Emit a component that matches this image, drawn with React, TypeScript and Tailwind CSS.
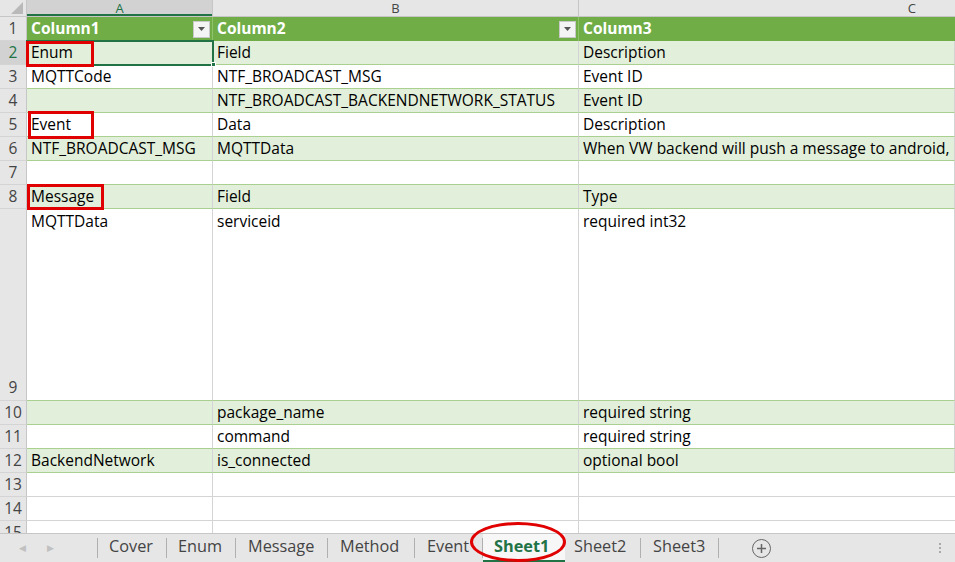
import React from "react";

const FONT = { fontFamily: '"Open Sans", "Liberation Sans", Arial, sans-serif' };

type Row = { n: number; h: number; band: boolean; a: string; b: string; c: string; top?: boolean };

const rows: Row[] = [
  { n: 2, h: 24, band: true, a: "Enum", b: "Field", c: "Description" },
  { n: 3, h: 24, band: false, a: "MQTTCode", b: "NTF_BROADCAST_MSG", c: "Event ID" },
  { n: 4, h: 24, band: true, a: "", b: "NTF_BROADCAST_BACKENDNETWORK_STATUS", c: "Event ID" },
  { n: 5, h: 24, band: false, a: "Event", b: "Data", c: "Description" },
  { n: 6, h: 24, band: true, a: "NTF_BROADCAST_MSG", b: "MQTTData", c: "When VW backend will push a message to android," },
  { n: 7, h: 24, band: false, a: "", b: "", c: "" },
  { n: 8, h: 24, band: true, a: "Message", b: "Field", c: "Type" },
  { n: 9, h: 192, band: false, a: "MQTTData", b: "serviceid", c: "required int32", top: true },
  { n: 10, h: 24, band: true, a: "", b: "package_name", c: "required string" },
  { n: 11, h: 24, band: false, a: "", b: "command", c: "required string" },
  { n: 12, h: 24, band: true, a: "BackendNetwork", b: "is_connected", c: "optional bool" },
];

function Dropdown() {
  return (
    <div className="w-[17px] h-[17px] bg-[#f4f4f4] border border-[#c8c8c8] flex items-center justify-center">
      <svg width="7" height="4" viewBox="0 0 7 4">
        <path d="M0 0 L7 0 L3.5 4 Z" fill="#555" />
      </svg>
    </div>
  );
}

function Cell({ text, band, top, w }: { text: string; band: boolean; top?: boolean; w: string }) {
  return (
    <div
      className={`${w} shrink-0 h-full overflow-hidden whitespace-nowrap pl-[4px] text-[15.5px] leading-none text-black border-r border-b border-b-[#a9d08e] border-r-[#d4d4d4] ${
        band ? "bg-[#e2efda]" : "bg-white"
      } flex ${top ? "items-start pt-[5px]" : "items-center pt-[1px]"}`}
    >
      {text}
    </div>
  );
}

function Sep() {
  return <div className="w-px h-[20px] bg-[#b0b0b0] shrink-0" />;
}

export default function App() {
  return (
    <div className="w-[955px] h-[562px] overflow-hidden bg-white relative select-none" style={FONT}>
      {/* column headers */}
      <div className="flex h-[17px] bg-[#e6e6e6] border-b border-[#c6c6c6]">
        <div className="w-[27px] shrink-0 h-full border-r border-[#c6c6c6] relative">
          <svg className="absolute right-[3px] bottom-[2px]" width="12" height="12" viewBox="0 0 12 12">
            <path d="M12 0 L12 12 L0 12 Z" fill="#b9b9b9" />
          </svg>
        </div>
        <div className="w-[186px] shrink-0 h-full bg-[#d2d2d2] border-r border-[#c6c6c6] shadow-[inset_0_-2px_0_#217346] flex items-center justify-center text-[13px] text-[#217346] leading-none">
          A
        </div>
        <div className="w-[366px] shrink-0 h-full border-r border-[#c6c6c6] flex items-center justify-center text-[13px] text-[#444] leading-none">
          B
        </div>
        <div className="flex-1 h-full flex items-center justify-end pr-[39px] text-[13px] text-[#444] leading-none">
          C
        </div>
      </div>

      {/* row 1 header */}
      <div className="flex h-[24px]">
        <div className="w-[27px] shrink-0 bg-[#e6e6e6] border-r border-[#c6c6c6] border-b border-b-[#d4d4d4] flex items-center justify-center text-[15.5px] leading-none text-[#444]">
          1
        </div>
        <div className="w-[186px] shrink-0 bg-[#70ad47] border-r border-[#8fc36b] flex items-center justify-between pl-[4px] pr-[2px] text-white font-bold text-[15.5px] leading-none">
          <span>Column1</span>
          <Dropdown />
        </div>
        <div className="w-[366px] shrink-0 bg-[#70ad47] border-r border-[#8fc36b] flex items-center justify-between pl-[4px] pr-[2px] text-white font-bold text-[15.5px] leading-none">
          <span>Column2</span>
          <Dropdown />
        </div>
        <div className="flex-1 bg-[#70ad47] flex items-center pl-[4px] text-white font-bold text-[15.5px] leading-none">
          Column3
        </div>
      </div>

      {/* data rows */}
      {rows.map((r) => (
        <div key={r.n} className="flex" style={{ height: r.h }}>
          <div
            className={`w-[27px] shrink-0 border-r border-[#c6c6c6] border-b border-b-[#d4d4d4] flex justify-center text-[15.5px] leading-none ${
              r.h > 24 ? "items-end pb-[5px]" : "items-center pt-[1px]"
            } ${r.n === 2 ? "bg-[#d2d2d2] text-[#217346]" : "bg-[#e6e6e6] text-[#444]"}`}
          >
            {r.n}
          </div>
          <Cell text={r.a} band={r.band} top={r.top} w="w-[186px]" />
          <Cell text={r.b} band={r.band} top={r.top} w="w-[366px]" />
          <Cell text={r.c} band={r.band} top={r.top} w="flex-1" />
        </div>
      ))}

      {[13, 14, 15].map((n) => (
        <div key={n} className="flex h-[24px]">
          <div className="w-[27px] shrink-0 bg-[#e6e6e6] border-r border-[#c6c6c6] border-b border-b-[#d4d4d4] flex items-center justify-center text-[15.5px] leading-none text-[#444] pt-[1px]">
            {n}
          </div>
          <div className="w-[186px] shrink-0 border-r border-b border-[#d4d4d4]" />
          <div className="w-[366px] shrink-0 border-r border-b border-[#d4d4d4]" />
          <div className="flex-1 border-b border-[#d4d4d4]" />
        </div>
      ))}

      {/* selection A2 */}
      <div className="absolute left-[26px] top-[40px] w-[188px] h-[26px] border-2 border-[#217346] pointer-events-none" />
      <div className="absolute left-[211px] top-[62px] w-[5px] h-[5px] bg-[#217346] border border-white" />

      {/* red annotation boxes */}
      <div className="absolute left-[26px] top-[41px] w-[68px] h-[26px] border-[3px] border-[#e00000]" />
      <div className="absolute left-[28px] top-[111px] w-[66px] h-[28px] border-[3px] border-[#e00000]" />
      <div className="absolute left-[27px] top-[184px] w-[77px] h-[26px] border-[3px] border-[#e00000]" />

      {/* sheet tab bar */}
      <div className="absolute left-0 top-[533px] w-[955px] h-[29px] bg-[#e6e6e6] border-t border-[#c6c6c6] flex items-center text-[16.3px] text-[#444] whitespace-nowrap">
        <div className="w-[97px] shrink-0 flex items-center h-full">
          <span className="ml-[19px] text-[9px] text-[#c0c0c0]">◀</span>
          <span className="ml-[21px] text-[9px] text-[#c0c0c0]">▶</span>
        </div>
        <Sep />
        <div className="w-[68px] shrink-0 pl-[11px] h-full flex items-center pb-[4px]">Cover</div>
        <Sep />
        <div className="w-[68px] shrink-0 pl-[11px] h-full flex items-center pb-[4px]">Enum</div>
        <Sep />
        <div className="w-[91px] shrink-0 pl-[12px] h-full flex items-center pb-[4px]">Message</div>
        <Sep />
        <div className="w-[86px] shrink-0 pl-[12px] h-full flex items-center pb-[4px]">Method</div>
        <Sep />
        <div className="w-[67px] shrink-0 pl-[12px] h-full flex items-center pb-[4px]">Event</div>
        <Sep />
        <div className="w-[82px] shrink-0 h-full bg-[#f7f7f7] pl-[11px] flex items-center font-bold text-[#217346] border-b-2 border-[#217346] pb-[2px]">
          Sheet1
        </div>
        <div className="w-[75px] shrink-0 pl-[9px] h-full flex items-center pb-[4px]">Sheet2</div>
        <Sep />
        <div className="w-[77px] shrink-0 pl-[12px] h-full flex items-center pb-[4px]">Sheet3</div>
        <Sep />
        <div className="ml-[33px] w-[19px] h-[19px] rounded-full border-[1.5px] border-[#666] flex items-center justify-center">
          <svg width="11" height="11" viewBox="0 0 11 11">
            <path d="M5.5 1 V10 M1 5.5 H10" stroke="#666" strokeWidth="1.5" />
          </svg>
        </div>
        <div className="ml-auto mr-[14px] flex flex-col gap-[2px]">
          <div className="w-[2px] h-[2px] bg-[#aaa]" />
          <div className="w-[2px] h-[2px] bg-[#aaa]" />
          <div className="w-[2px] h-[2px] bg-[#aaa]" />
        </div>
      </div>

      {/* red ellipse around Sheet1 */}
      <div className="absolute left-[470px] top-[522px] w-[96px] h-[40px] rounded-[50%] border-[3px] border-[#e00000]" />
    </div>
  );
}
